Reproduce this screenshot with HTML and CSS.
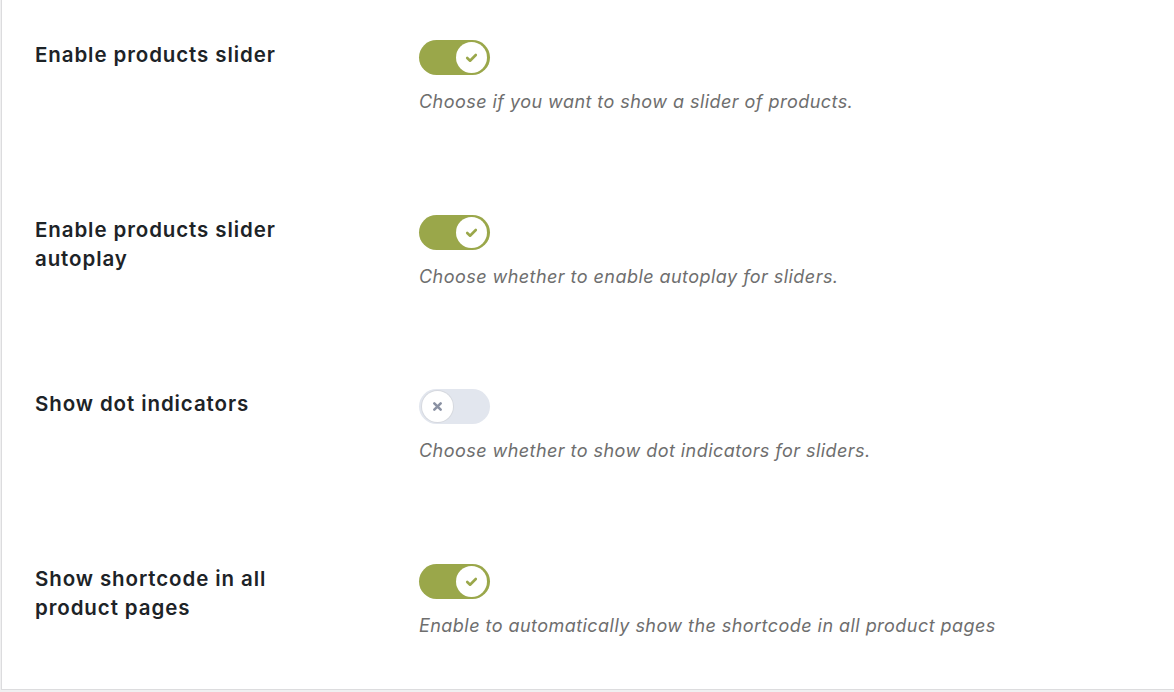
FILE: index.html
```html
<!DOCTYPE html>
<html>
<head>
<meta charset="utf-8">
<link rel="stylesheet" href="styles.css">
</head>
<body>
<div class="panel">
  <div class="row">
    <div class="label">Enable products slider</div>
    <div class="field">
      <span class="toggle on"><span class="knob"><svg viewBox="0 0 16 16" width="19" height="19"><path d="M4.4 8.4l2.4 2.3L11.6 5.9" fill="none" stroke="#9aa74a" stroke-width="2.2" stroke-linecap="round" stroke-linejoin="round"/></svg></span></span>
      <p class="desc">Choose if you want to show a slider of products.</p>
    </div>
  </div>
  <div class="row">
    <div class="label">Enable products slider autoplay</div>
    <div class="field">
      <span class="toggle on"><span class="knob"><svg viewBox="0 0 16 16" width="19" height="19"><path d="M4.4 8.4l2.4 2.3L11.6 5.9" fill="none" stroke="#9aa74a" stroke-width="2.2" stroke-linecap="round" stroke-linejoin="round"/></svg></span></span>
      <p class="desc">Choose whether to enable autoplay for sliders.</p>
    </div>
  </div>
  <div class="row">
    <div class="label">Show dot indicators</div>
    <div class="field">
      <span class="toggle off"><span class="knob"><svg viewBox="0 0 16 16" width="17" height="17"><path d="M5 5l6 6M11 5l-6 6" fill="none" stroke="#8a91a3" stroke-width="2.4" stroke-linecap="round"/></svg></span></span>
      <p class="desc">Choose whether to show dot indicators for sliders.</p>
    </div>
  </div>
  <div class="row">
    <div class="label">Show shortcode in all product pages</div>
    <div class="field">
      <span class="toggle on"><span class="knob"><svg viewBox="0 0 16 16" width="19" height="19"><path d="M4.4 8.4l2.4 2.3L11.6 5.9" fill="none" stroke="#9aa74a" stroke-width="2.2" stroke-linecap="round" stroke-linejoin="round"/></svg></span></span>
      <p class="desc">Enable to automatically show the shortcode in all product pages</p>
    </div>
  </div>
</div>
</body>
</html>
```

FILE: styles.css
```css
html, body {
  margin: 0;
  padding: 0;
  background: #f0f0f1;
}
body {
  font-family: Inter, "Noto Sans", sans-serif;
  height: 692px;
  overflow: hidden;
}
.panel {
  margin-left: 1px;
  background: #fff;
  border-left: 1px solid #dcdcde;
  border-bottom: 1px solid #dcdcde;
  padding: 40px 0 51px 33px;
  display: flex;
  flex-direction: column;
  gap: 100.5px;
}
.row {
  display: flex;
  align-items: flex-start;
}
.label {
  width: 252px;
  margin-right: 132px;
  font-size: 20.5px;
  line-height: 29px;
  font-weight: 600;
  letter-spacing: 0.9px;
  color: #1d2327;
}
.field {
  display: flex;
  flex-direction: column;
  align-items: flex-start;
}
.toggle {
  width: 71px;
  height: 35px;
  border-radius: 18px;
  box-sizing: border-box;
  padding: 2px 3px;
  display: flex;
  align-items: center;
}
.toggle.on {
  background: #9aa74a;
  justify-content: flex-end;
}
.toggle.off {
  background: #e2e6ee;
  justify-content: flex-start;
}
.knob {
  width: 31px;
  height: 31px;
  border-radius: 50%;
  background: #fff;
  display: flex;
  align-items: center;
  justify-content: center;
}
.toggle.off .knob {
  box-shadow: 0 0 0 1px #d6d9df;
}
.desc {
  margin: 15px 0 0 0;
  font-size: 18px;
  line-height: 24px;
  font-style: italic;
  letter-spacing: 0.45px;
  color: #6e6e6e;
}
```
